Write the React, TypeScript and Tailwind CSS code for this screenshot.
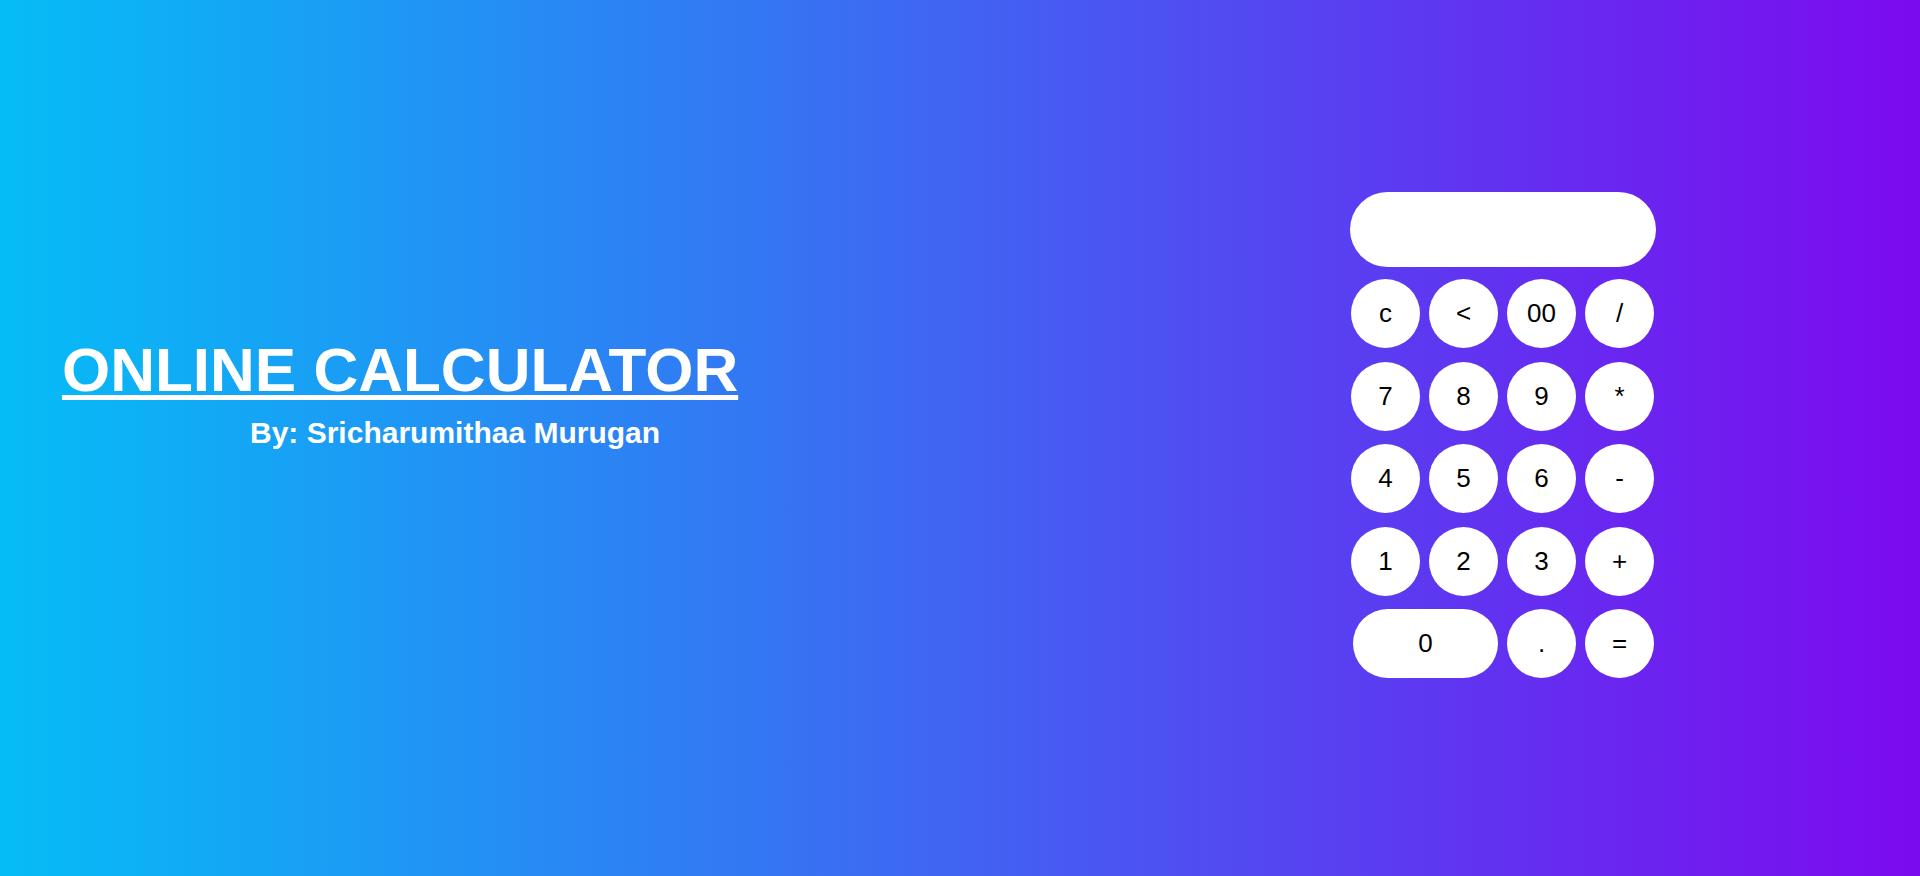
const rows: string[][] = [
  ["c", "<", "00", "/"],
  ["7", "8", "9", "*"],
  ["4", "5", "6", "-"],
  ["1", "2", "3", "+"],
];

function Key({ label, wide }: { label: string; wide?: boolean }) {
  return (
    <button
      className={
        wide
          ? "ml-[2px] h-[69px] w-[145px] rounded-full bg-white text-[26px] text-black"
          : "h-[69px] w-[69px] rounded-full bg-white text-[26px] text-black"
      }
    >
      {label}
    </button>
  );
}

export default function App() {
  return (
    <main
      className="flex h-[876px] w-full items-start justify-between bg-[linear-gradient(to_right,#05bdf6,#7c0aef)] pl-[62px] pr-[264px] text-white"
      style={{ fontFamily: '"Liberation Sans", Arial, sans-serif' }}
    >
      <section className="pt-[334px]">
        <h1 className="text-[62px] font-bold leading-[72px] underline decoration-[5px] underline-offset-[4px]">
          ONLINE CALCULATOR
        </h1>
        <p className="mt-[10px] pl-[188px] text-[30px] font-bold leading-[34px]">
          By: Sricharumithaa Murugan
        </p>
      </section>

      <div className="mt-[192px] flex w-[306px] flex-col">
        <div className="h-[75px] w-full rounded-full bg-white" />
        <div className="mt-[12px] flex flex-col gap-[13.5px] px-[1px]">
          {rows.map((row, i) => (
            <div key={i} className="flex gap-[9px]">
              {row.map((k) => (
                <Key key={k} label={k} />
              ))}
            </div>
          ))}
          <div className="flex gap-[9px]">
            <Key label="0" wide />
            <Key label="." />
            <Key label="=" />
          </div>
        </div>
      </div>
    </main>
  );
}
